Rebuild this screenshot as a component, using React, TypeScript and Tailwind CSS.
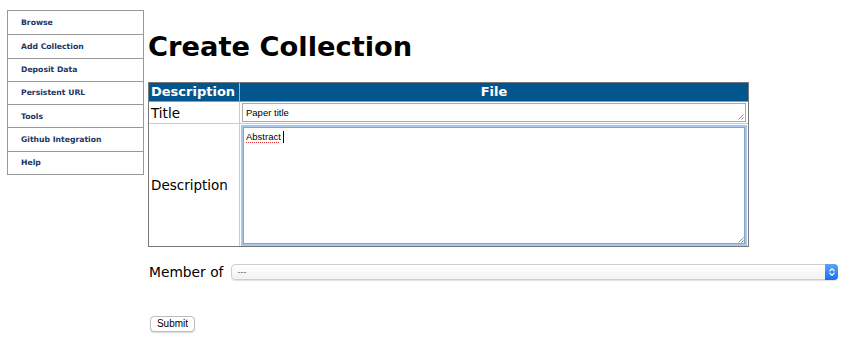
import { ChevronsUpDown } from 'lucide-react'

const menu = ['Browse', 'Add Collection', 'Deposit Data', 'Persistent URL', 'Tools', 'Github Integration', 'Help']

// little diagonal grip drawn in the corner of a resizable field
const Grip = () => (
    <svg className="absolute right-[1px] bottom-[1px]" width="7" height="7" viewBox="0 0 7 7">
        <path d="M6.5 1.5 L1.5 6.5 M6.5 4.5 L4.5 6.5" stroke="#888" strokeWidth="1" />
    </svg>
)

const Sidebar = () => {
    return (
        <div className="self-start ml-[7px] mt-[10px] w-[137px] border border-[#999] bg-white">
            {menu.map((item, i) => (
                <div
                    key={item}
                    className={`h-[23.3px] flex items-center pl-[13px] text-[7.7px] font-bold text-[#1a3566] ${
                        i > 0 ? 'border-t border-[#999]' : ''
                    }`}
                >
                    {item}
                </div>
            ))}
        </div>
    )
}

const App = () => {
    return (
        <div className="w-[862px] h-[343px] bg-white flex font-['DejaVu_Sans',Verdana,sans-serif] text-black overflow-hidden">
            <Sidebar />
            <div className="ml-[4px] flex flex-col">
                <h1 className="mt-[33px] text-[27.3px] leading-[28px] font-bold">Create Collection</h1>
                <div className="mt-[21px] w-[601px] border border-[#777]">
                    <div className="grid grid-cols-[91px_1fr] h-[18px] bg-[#03558d] text-white text-[13px] font-bold leading-[18px]">
                        <div className="pl-[2px] border-r border-[#9bb5cf]">Description</div>
                        <div className="text-center">File</div>
                    </div>
                    <div className="grid grid-cols-[91px_1fr] h-[22px] border-t border-[#999]">
                        <div className="pl-[2px] text-[13.5px] leading-[22px] border-r border-[#ccc]">Title</div>
                        <div className="px-[2px] pt-[1px]">
                            <div className="relative h-[19px] border border-[#aaa] bg-white pl-[3px] text-[9.5px] leading-[17px] font-['Liberation_Sans',Arial,sans-serif]">
                                Paper title
                                <Grip />
                            </div>
                        </div>
                    </div>
                    <div className="grid grid-cols-[91px_1fr] h-[123px] border-t border-[#ccc]">
                        <div className="pl-[2px] flex items-center text-[13.5px] border-r border-[#ccc]">Description</div>
                        <div className="px-[1px] pt-[1px]">
                            <div className="relative h-[121px] border-2 border-[#a7c7ee] bg-white">
                                <div className="h-full border border-[#8da2bd] pl-[2px] pt-[3px] text-[9.5px] leading-[11px] font-['Liberation_Sans',Arial,sans-serif] flex items-start">
                                    <span className="underline decoration-dotted decoration-[#d33] underline-offset-2">Abstract</span>
                                    <span className="ml-[2px] inline-block w-px h-[12px] bg-black" />
                                </div>
                                <Grip />
                            </div>
                        </div>
                    </div>
                </div>
                <div className="mt-[17px] flex items-center">
                    <span className="ml-[1px] text-[13.8px] leading-[16px]">Member of</span>
                    <div className="ml-[8px] w-[607px] h-[16px] flex rounded-[4px] border border-[#cfcfcf] bg-gradient-to-b from-white to-[#f2f2f2] shadow-[0_1px_0_#e4e4e4]">
                        <span className="flex-1 pl-[5px] text-[9px] leading-[14px] text-[#666] font-['Liberation_Sans',Arial,sans-serif]">---</span>
                        <span className="w-[13px] -my-px -mr-px rounded-r-[4px] bg-gradient-to-b from-[#5aa5f9] to-[#1c6ef0] flex items-center justify-center text-white">
                            <ChevronsUpDown size={10} strokeWidth={3} />
                        </span>
                    </div>
                </div>
                <button className="mt-[36px] ml-[2px] w-[45px] h-[16px] rounded-[4px] border border-[#bdbdbd] bg-white text-[10px] leading-[14px] font-['Liberation_Sans',Arial,sans-serif] shadow-[0_1px_1px_#ddd]">
                    Submit
                </button>
            </div>
        </div>
    )
}

export default App
